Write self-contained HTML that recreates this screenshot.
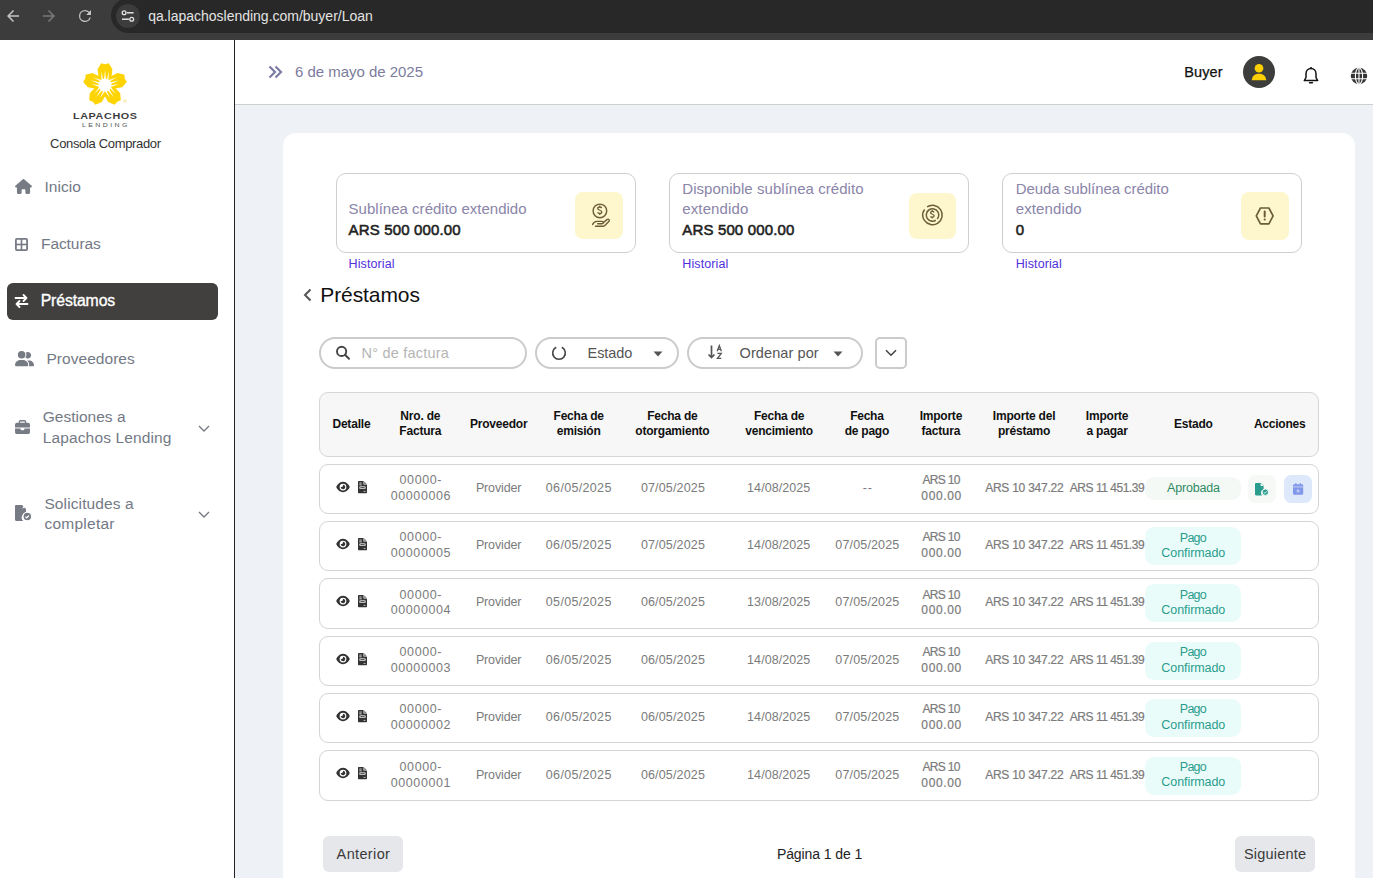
<!DOCTYPE html>
<html><head><meta charset="utf-8"><style>
html,body{margin:0;padding:0;width:1373px;height:878px;overflow:hidden;background:#fff;position:relative;font-family:"Liberation Sans", sans-serif;}
.t{position:absolute;white-space:nowrap;line-height:1;font-family:"Liberation Sans", sans-serif;}
svg{overflow:visible}
div{box-sizing:content-box}
</style></head><body>
<div style="position:absolute;left:0px;top:0px;width:1373px;height:40px;background:#3c3c3c"></div>
<div style="position:absolute;left:111px;top:-2px;width:1300px;height:35px;background:#282828;border-radius:17.5px"></div>
<div style="position:absolute;left:116px;top:4px;width:24px;height:24px;background:#3c3c3c;border-radius:50%"></div>
<svg style="position:absolute;left:4px;top:7px;" width="18" height="18" viewBox="0 0 24 24"><path d="M20 11H7.83l5.59-5.59L12 4l-8 8 8 8 1.41-1.41L7.83 13H20v-2z" fill="#c4c4c4"/></svg>
<svg style="position:absolute;left:40px;top:7px;" width="18" height="18" viewBox="0 0 24 24"><path d="M4 11h12.17l-5.59-5.59L12 4l8 8-8 8-1.41-1.41L16.17 13H4v-2z" fill="#7a7a7a"/></svg>
<svg style="position:absolute;left:76px;top:7px;" width="18" height="18" viewBox="0 0 24 24"><path d="M17.65 6.35A7.96 7.96 0 0 0 12 4a8 8 0 1 0 7.73 10h-1.8A6.3 6.3 0 1 1 12 5.7c1.74 0 3.3.72 4.44 1.86L13.5 10.5H20V4l-2.35 2.35z" fill="#c4c4c4"/></svg>
<svg style="position:absolute;left:116px;top:4px;" width="24" height="24" viewBox="0 0 24 24"><circle cx="8.1" cy="8.8" r="1.9" fill="none" stroke="#e3e3e3" stroke-width="1.3"/><line x1="10.9" y1="8.8" x2="17.6" y2="8.8" stroke="#e3e3e3" stroke-width="1.5"/><circle cx="15.7" cy="15.2" r="1.9" fill="none" stroke="#e3e3e3" stroke-width="1.3"/><line x1="6" y1="15.2" x2="12.9" y2="15.2" stroke="#e3e3e3" stroke-width="1.5"/></svg>
<div style="position:absolute;left:0px;top:40px;width:234px;height:838px;background:#fff"></div>
<div style="position:absolute;left:234px;top:40px;width:1px;height:838px;background:#222"></div>
<div style="position:absolute;left:235px;top:40px;width:1138px;height:64px;background:#fff"></div>
<div style="position:absolute;left:235px;top:104px;width:1138px;height:1px;background:#cfcfcf"></div>
<div style="position:absolute;left:235px;top:105px;width:1138px;height:773px;background:#eef1f5"></div>
<div style="position:absolute;left:283px;top:133px;width:1072px;height:760px;background:#fff;border-radius:13px"></div>
<svg style="position:absolute;left:82.8px;top:62.5px;" width="44" height="44" viewBox="-20.8 -20.8 41.6 41.6"><g transform="rotate(0)"><path d="M-3.6 -20.5 L0 -19.6 L3.6 -20.5 L7 -14.8 L6.2 -8 L3.2 -3.5 L-3.2 -3.5 L-6.2 -8 L-7 -14.8 Z" fill="#fdd300"/></g><g transform="rotate(72)"><path d="M-3.6 -20.5 L0 -19.6 L3.6 -20.5 L7 -14.8 L6.2 -8 L3.2 -3.5 L-3.2 -3.5 L-6.2 -8 L-7 -14.8 Z" fill="#fdd300"/></g><g transform="rotate(144)"><path d="M-3.6 -20.5 L0 -19.6 L3.6 -20.5 L7 -14.8 L6.2 -8 L3.2 -3.5 L-3.2 -3.5 L-6.2 -8 L-7 -14.8 Z" fill="#fdd300"/></g><g transform="rotate(216)"><path d="M-3.6 -20.5 L0 -19.6 L3.6 -20.5 L7 -14.8 L6.2 -8 L3.2 -3.5 L-3.2 -3.5 L-6.2 -8 L-7 -14.8 Z" fill="#fdd300"/></g><g transform="rotate(288)"><path d="M-3.6 -20.5 L0 -19.6 L3.6 -20.5 L7 -14.8 L6.2 -8 L3.2 -3.5 L-3.2 -3.5 L-6.2 -8 L-7 -14.8 Z" fill="#fdd300"/></g><g transform="rotate(0)"><path d="M-3.4 -5 L-3.4 -13.2 L-1.9 -5 Z M-0.9 -5 L0 -14.5 L0.9 -5 Z M1.9 -5 L3.4 -13.2 L3.4 -5 Z" fill="#fff"/></g><g transform="rotate(72)"><path d="M-3.4 -5 L-3.4 -13.2 L-1.9 -5 Z M-0.9 -5 L0 -14.5 L0.9 -5 Z M1.9 -5 L3.4 -13.2 L3.4 -5 Z" fill="#fff"/></g><g transform="rotate(144)"><path d="M-3.4 -5 L-3.4 -13.2 L-1.9 -5 Z M-0.9 -5 L0 -14.5 L0.9 -5 Z M1.9 -5 L3.4 -13.2 L3.4 -5 Z" fill="#fff"/></g><g transform="rotate(216)"><path d="M-3.4 -5 L-3.4 -13.2 L-1.9 -5 Z M-0.9 -5 L0 -14.5 L0.9 -5 Z M1.9 -5 L3.4 -13.2 L3.4 -5 Z" fill="#fff"/></g><g transform="rotate(288)"><path d="M-3.4 -5 L-3.4 -13.2 L-1.9 -5 Z M-0.9 -5 L0 -14.5 L0.9 -5 Z M1.9 -5 L3.4 -13.2 L3.4 -5 Z" fill="#fff"/></g><circle cx="0" cy="0" r="6.2" fill="#fff"/></svg>
<svg style="position:absolute;left:123px;top:98.5px;" width="4" height="4" viewBox="0 0 4 4"><circle cx="2" cy="2" r="1.3" fill="none" stroke="#f5dc70" stroke-width="0.6"/></svg>
<div style="position:absolute;left:7px;top:283px;width:211px;height:37px;background:#41403e;border-radius:6px"></div>
<svg style="position:absolute;left:15px;top:179px;" width="17" height="15" viewBox="0 0 576 512"><path fill="#777b84" d="M575.8 255.5c0 18-15 32.1-32 32.1h-32l.7 160.2c0 2.7-.2 5.4-.5 8.1V472c0 22.1-17.9 40-40 40H456c-1.1 0-2.2 0-3.3-.1c-1.4 .1-2.8 .1-4.2 .1H416 392c-22.1 0-40-17.9-40-40V448 384c0-17.7-14.3-32-32-32H256c-17.7 0-32 14.3-32 32v64 24c0 22.1-17.9 40-40 40H160 128.1c-1.5 0-3-.1-4.5-.2c-1.2 .1-2.4 .2-3.6 .2H104c-22.1 0-40-17.9-40-40V360c0-.9 0-1.9 .1-2.8V287.6H32c-18 0-32-14-32-32.1c0-9 3-17 10-24L266.4 8c7-7 15-8 22-8s15 2 21 7L564.8 231.5c8 7 12 15 11 24z"/></svg>
<svg style="position:absolute;left:15px;top:238px;" width="13" height="13" viewBox="0 0 13 13"><rect x="0.9" y="0.9" width="11.2" height="11.2" rx="1" fill="none" stroke="#777b84" stroke-width="1.8"/><line x1="6.5" y1="1" x2="6.5" y2="12" stroke="#777b84" stroke-width="1.6"/><line x1="1" y1="6.5" x2="12" y2="6.5" stroke="#777b84" stroke-width="1.6"/></svg>
<svg style="position:absolute;left:14px;top:293px;" width="15" height="16" viewBox="0 0 15 16"><path d="M1.5 5h11M9.5 2l3 3-3 3M13.5 11h-11M5.5 8l-3 3 3 3" fill="none" stroke="#fff" stroke-width="1.8" stroke-linecap="round" stroke-linejoin="round"/></svg>
<svg style="position:absolute;left:15px;top:351px;" width="19" height="15.2" viewBox="0 0 640 512"><path fill="#777b84" d="M96 128a128 128 0 1 1 256 0A128 128 0 1 1 96 128zM0 482.3C0 383.8 79.8 304 178.3 304h91.4C368.2 304 448 383.8 448 482.3c0 16.4-13.3 29.7-29.7 29.7H29.7C13.3 512 0 498.7 0 482.3zM609.3 512H471.4c5.4-9.4 8.6-20.3 8.6-32v-8c0-60.7-27.1-115.2-69.8-151.8c2.4-.1 4.7-.2 7.1-.2h61.4C567.8 320 640 392.2 640 481.3c0 17-13.8 30.7-30.7 30.7zM432 256c-31 0-59-12.6-79.3-32.9C372.4 196.5 384 163.6 384 128c0-26.8-6.6-52.1-18.3-74.3C384.3 40.1 407.2 32 432 32c61.9 0 112 50.1 112 112s-50.1 112-112 112z"/></svg>
<svg style="position:absolute;left:15px;top:420px;" width="15" height="14" viewBox="0 0 512 480"><path fill="#777b84" d="M184 48H328c4.4 0 8 3.6 8 8V96H176V56c0-4.4 3.6-8 8-8zm-56 8V96H64C28.7 96 0 124.7 0 160v96H192 320 512V160c0-35.3-28.7-64-64-64H384V56c0-30.9-25.1-56-56-56H184c-30.9 0-56 25.1-56 56zM512 288H320v32c0 17.7-14.3 32-32 32H224c-17.7 0-32-14.3-32-32V288H0V416c0 35.3 28.7 64 64 64H448c35.3 0 64-28.7 64-64V288z"/></svg>
<svg style="position:absolute;left:15px;top:505px;" width="18" height="17" viewBox="0 0 18 17"><path d="M0 1.2C0 .5.5 0 1.2 0H7l4 4v4A4.6 4.6 0 0 0 8.2 16H1.2C.5 16 0 15.5 0 14.8z" fill="#777b84"/><path d="M7 0v4h4z" fill="#fff"/><path d="M7.5 0.5v3h3" fill="none" stroke="#777b84" stroke-width="0.9"/><circle cx="12.3" cy="11.5" r="4.3" fill="#777b84" stroke="#fff" stroke-width="1.1"/><path d="M10.4 11.6l1.3 1.3 2.3-2.4" fill="none" stroke="#fff" stroke-width="1.1"/></svg>
<svg style="position:absolute;left:197.5px;top:425px;" width="12" height="8" viewBox="0 0 12 8"><path d="M1 1l5 5L11 1" fill="none" stroke="#777b84" stroke-width="1.4"/></svg>
<svg style="position:absolute;left:197.5px;top:511px;" width="12" height="8" viewBox="0 0 12 8"><path d="M1 1l5 5L11 1" fill="none" stroke="#777b84" stroke-width="1.4"/></svg>
<svg style="position:absolute;left:268px;top:65px;" width="15" height="14" viewBox="0 0 15 14"><path d="M1.5 1.5l5.5 5.5-5.5 5.5M7.5 1.5l5.5 5.5-5.5 5.5" fill="none" stroke="#7b7ba3" stroke-width="2.2" stroke-linejoin="miter"/></svg>
<div style="position:absolute;left:1243px;top:56px;width:32px;height:32px;background:#3d3d3b;border-radius:50%"></div>
<svg style="position:absolute;left:1243px;top:56px;" width="32" height="32" viewBox="0 0 32 32"><circle cx="16" cy="12.2" r="4.3" fill="#fcd000"/><path d="M8.8 24.3c0-4 3-6.6 7.2-6.6s7.2 2.6 7.2 6.6z" fill="#fcd000"/></svg>
<svg style="position:absolute;left:1302px;top:66px;" width="18" height="19" viewBox="0 0 18 19"><path d="M9 2.6c-3 0-5 2.3-5 5.3v3.6L2.3 14.6h13.4L14 11.5V7.9c0-3-2-5.3-5-5.3z" fill="none" stroke="#111" stroke-width="1.5" stroke-linejoin="round"/><path d="M9 1v1.6" stroke="#111" stroke-width="1.5"/><path d="M7.6 16.8h2.8" stroke="#111" stroke-width="1.6" stroke-linecap="round"/></svg>
<svg style="position:absolute;left:1350px;top:67px;" width="18" height="18" viewBox="0 0 18 18"><circle cx="9" cy="9" r="8.2" fill="#333"/><path d="M0.8 6.2h16.4M0.8 11.8h16.4M9 0.8v16.4" stroke="#fff" stroke-width="1.1"/><ellipse cx="9" cy="9" rx="3.6" ry="8.2" fill="none" stroke="#fff" stroke-width="1.1"/></svg>
<div style="position:absolute;left:336px;top:173px;width:298px;height:78px;border:1px solid #cfcfcf;border-radius:10px;background:#fff"></div>
<div style="position:absolute;left:669px;top:173px;width:298px;height:78px;border:1px solid #cfcfcf;border-radius:10px;background:#fff"></div>
<div style="position:absolute;left:1002px;top:173px;width:298px;height:78px;border:1px solid #cfcfcf;border-radius:10px;background:#fff"></div>
<div style="position:absolute;left:575px;top:192px;width:48px;height:47px;background:#fef6cc;border-radius:8px"></div>
<svg style="position:absolute;left:575px;top:192px;" width="48" height="47" viewBox="0 0 48 47"><circle cx="24.9" cy="18.9" r="6.8" fill="none" stroke="#6b5d3a" stroke-width="1.4"/><path d="M26.7 16c-.5-.7-1.2-1-2-1-1.2 0-2 .7-2 1.6 0 2 4.1 1.3 4.1 3.3 0 .9-.9 1.6-2.2 1.6-.9 0-1.6-.4-2.1-1.1M24.8 13.6v1.4M24.8 21.5v1.5" fill="none" stroke="#6b5d3a" stroke-width="1.3"/><path d="M17.6 32.6c.8-2.1 2.4-3.2 4.4-3.2h5c.9 0 1.4.6 1.4 1.2s-.5 1.2-1.4 1.2h-4.3M28 31l3.9-3.4c.7-.6 1.6-.6 2.1 0 .5.6.4 1.4-.2 2l-3.9 3.8c-.6.6-1.3.9-2.1.9h-7.3" fill="none" stroke="#6b5d3a" stroke-width="1.4" stroke-linecap="round"/></svg>
<div style="position:absolute;left:909px;top:193px;width:47px;height:46px;background:#fef6cc;border-radius:8px"></div>
<svg style="position:absolute;left:909px;top:193px;" width="47" height="46" viewBox="0 0 47 46"><circle cx="23.5" cy="22" r="9.7" fill="none" stroke="#6b5d3a" stroke-width="1.5" stroke-dasharray="57 4" transform="rotate(236 23.5 22)"/><circle cx="23.5" cy="22" r="6.2" fill="none" stroke="#6b5d3a" stroke-width="1.5" stroke-dasharray="36 3" transform="rotate(58 23.5 22)"/><path d="M25.1 19.3c-.4-.6-1-.9-1.8-.9-1 0-1.7.6-1.7 1.4 0 1.8 3.6 1.1 3.6 3 0 .8-.8 1.4-1.9 1.4-.8 0-1.4-.3-1.8-.9M23.3 17.1v1.3M23.3 24.3v1.3" fill="none" stroke="#6b5d3a" stroke-width="1.3"/></svg>
<div style="position:absolute;left:1241px;top:192px;width:48px;height:48px;background:#fef6cc;border-radius:8px"></div>
<svg style="position:absolute;left:1241px;top:192px;" width="48" height="48" viewBox="0 0 48 48"><path d="M19.5 16h8.4l4.2 7.9-4.2 7.9h-8.4l-4.2-7.9z" fill="none" stroke="#6b5d3a" stroke-width="1.7" stroke-linejoin="round"/><path d="M23.7 19.6v5" stroke="#6b5d3a" stroke-width="2" stroke-linecap="round"/><circle cx="23.7" cy="27.5" r="1.1" fill="#6b5d3a"/></svg>
<svg style="position:absolute;left:302px;top:288px;" width="11" height="14" viewBox="0 0 11 14"><path d="M8.5 1.5L3 7l5.5 5.5" fill="none" stroke="#555" stroke-width="2"/></svg>
<div style="position:absolute;left:319px;top:337px;width:204px;height:28px;border:2px solid #cbcbcb;border-radius:16px"></div>
<svg style="position:absolute;left:335px;top:345px;" width="16" height="15" viewBox="0 0 16 15"><circle cx="6.6" cy="6.4" r="4.6" fill="none" stroke="#444" stroke-width="1.9"/><path d="M10 9.8l4 4" stroke="#444" stroke-width="2" stroke-linecap="round"/></svg>
<div style="position:absolute;left:535px;top:337px;width:140px;height:28px;border:2px solid #cbcbcb;border-radius:16px"></div>
<svg style="position:absolute;left:551px;top:345px;" width="16" height="16" viewBox="0 0 16 16"><path d="M5.2 2.3A6.3 6.3 0 1 0 10.8 2.3" fill="none" stroke="#444" stroke-width="1.6"/></svg>
<svg style="position:absolute;left:652px;top:350px;" width="12" height="8" viewBox="0 0 12 8"><path d="M1.5 1.5h9L6 6.5z" fill="#555"/></svg>
<div style="position:absolute;left:687px;top:337px;width:172px;height:28px;border:2px solid #cbcbcb;border-radius:16px"></div>
<svg style="position:absolute;left:707px;top:344px;" width="18" height="16" viewBox="0 0 18 16"><path d="M4.5 1.5v12M1.5 10.5l3 3 3-3" fill="none" stroke="#555" stroke-width="1.7"/><path d="M10.2 7.2l2.1-5.6 2.1 5.6M10.9 5.4h2.8" fill="none" stroke="#555" stroke-width="1.3"/><path d="M10.4 9.3h3.9l-3.9 5h3.9" fill="none" stroke="#555" stroke-width="1.3"/></svg>
<svg style="position:absolute;left:832px;top:350px;" width="12" height="8" viewBox="0 0 12 8"><path d="M1.5 1.5h9L6 6.5z" fill="#555"/></svg>
<div style="position:absolute;left:875px;top:337px;width:28px;height:28px;border:2px solid #cbcbcb;border-radius:5px"></div>
<svg style="position:absolute;left:885px;top:349px;" width="12" height="8" viewBox="0 0 12 8"><path d="M1 1.2l5 5 5-5" fill="none" stroke="#444" stroke-width="1.6"/></svg>
<div style="position:absolute;left:319px;top:392px;width:998px;height:63px;border:1px solid #d6d6d6;border-radius:9px;background:#f7f7f7"></div>
<div style="position:absolute;left:319px;top:464px;width:998px;height:48px;border:1px solid #d4d4d4;border-radius:9px;background:#fff"></div>
<svg style="position:absolute;left:336px;top:480.79999999999995px;" width="14" height="12" viewBox="0 0 576 512"><path fill="#333" d="M288 32c-80.8 0-145.5 36.8-192.6 80.6C48.6 156 17.3 208 2.5 243.7c-3.3 7.9-3.3 16.7 0 24.6C17.3 304 48.6 356 95.4 399.4C142.5 443.2 207.2 480 288 480s145.5-36.8 192.6-80.6c46.8-43.5 78.1-95.4 93-131.1c3.3-7.9 3.3-16.7 0-24.6c-14.9-35.7-46.2-87.7-93-131.1C433.5 68.8 368.8 32 288 32zM144 256a144 144 0 1 1 288 0 144 144 0 1 1 -288 0zm144-64c0 35.3-28.7 64-64 64c-7.1 0-13.9-1.2-20.3-3.3c-5.5-1.8-11.9 1.6-11.7 7.4c.3 6.9 1.3 13.8 3.2 20.7c13.7 51.2 66.4 81.6 117.6 67.9s81.6-66.4 67.9-117.6c-11.1-41.5-47.8-69.4-88.6-71.1c-5.8-.2-9.2 6.1-7.4 11.7c2.1 6.4 3.3 13.2 3.3 20.3z"/></svg>
<svg style="position:absolute;left:358.1px;top:481.0px;" width="9" height="12.2" viewBox="0 0 9 12.2"><path fill="#333" d="M1 0H5.6L9 3.4V11.2C9 11.8 8.6 12.2 8 12.2H1C.4 12.2 0 11.8 0 11.2V1C0 .4.4 0 1 0z"/><path fill="#fff" d="M5.5 0V3.5H9z"/><path fill="#333" d="M6.3 0.9L8.2 2.8H6.3z"/><rect x="1.3" y="1.6" width="2.4" height="0.9" fill="#e0e0e0"/><rect x="1.3" y="3.4" width="2.4" height="0.9" fill="#e0e0e0"/><rect x="1.2" y="5.3" width="6.6" height="2.8" rx="1.4" fill="#d6d6d6"/><rect x="2.4" y="6.25" width="4.2" height="0.9" fill="#333"/><rect x="5.6" y="9.9" width="1.9" height="0.9" fill="#cfcfcf"/></svg>
<div style="position:absolute;left:1145px;top:477px;width:96px;height:23px;background:#f5f9f6;border-radius:9px"></div>
<div style="position:absolute;left:1248px;top:475px;width:28px;height:28px;background:#f6f9f6;border-radius:7px"></div>
<svg style="position:absolute;left:1255px;top:482.59999999999997px;" width="15" height="13" viewBox="0 0 15 13"><path d="M0 1.2C0 .5.5 0 1.2 0h4.8L8.6 2.6v3.6A3.8 3.8 0 0 0 7 12.4H1.2C.5 12.4 0 11.9 0 11.2z" fill="#2a9d8f"/><path d="M5.7 0v2.9h2.9z" fill="#fff"/><circle cx="10.3" cy="9.2" r="3.2" fill="#2a9d8f" stroke="#fff" stroke-width="0.9"/><path d="M8.9 9.3l1 1 1.8-1.9" fill="none" stroke="#fff" stroke-width="0.9"/></svg>
<div style="position:absolute;left:1284px;top:475px;width:28px;height:28px;background:#dde9fb;border-radius:7px"></div>
<svg style="position:absolute;left:1293px;top:482.7px;" width="11" height="12" viewBox="0 0 11 12"><rect x="0" y="1.2" width="10.2" height="10.6" rx="1.3" fill="#8197ea"/><rect x="0" y="3.3" width="10.2" height="1.2" fill="#b9c5f3"/><rect x="2.3" y="0" width="1.1" height="2.4" fill="#8197ea"/><rect x="6.8" y="0" width="1.1" height="2.4" fill="#8197ea"/><path d="M5.1 6.2v3.6M3.3 8h3.6" stroke="#c8d2f6" stroke-width="1.2"/></svg>
<div style="position:absolute;left:319px;top:521px;width:998px;height:48px;border:1px solid #d4d4d4;border-radius:9px;background:#fff"></div>
<svg style="position:absolute;left:336px;top:537.6999999999999px;" width="14" height="12" viewBox="0 0 576 512"><path fill="#333" d="M288 32c-80.8 0-145.5 36.8-192.6 80.6C48.6 156 17.3 208 2.5 243.7c-3.3 7.9-3.3 16.7 0 24.6C17.3 304 48.6 356 95.4 399.4C142.5 443.2 207.2 480 288 480s145.5-36.8 192.6-80.6c46.8-43.5 78.1-95.4 93-131.1c3.3-7.9 3.3-16.7 0-24.6c-14.9-35.7-46.2-87.7-93-131.1C433.5 68.8 368.8 32 288 32zM144 256a144 144 0 1 1 288 0 144 144 0 1 1 -288 0zm144-64c0 35.3-28.7 64-64 64c-7.1 0-13.9-1.2-20.3-3.3c-5.5-1.8-11.9 1.6-11.7 7.4c.3 6.9 1.3 13.8 3.2 20.7c13.7 51.2 66.4 81.6 117.6 67.9s81.6-66.4 67.9-117.6c-11.1-41.5-47.8-69.4-88.6-71.1c-5.8-.2-9.2 6.1-7.4 11.7c2.1 6.4 3.3 13.2 3.3 20.3z"/></svg>
<svg style="position:absolute;left:358.1px;top:537.9px;" width="9" height="12.2" viewBox="0 0 9 12.2"><path fill="#333" d="M1 0H5.6L9 3.4V11.2C9 11.8 8.6 12.2 8 12.2H1C.4 12.2 0 11.8 0 11.2V1C0 .4.4 0 1 0z"/><path fill="#fff" d="M5.5 0V3.5H9z"/><path fill="#333" d="M6.3 0.9L8.2 2.8H6.3z"/><rect x="1.3" y="1.6" width="2.4" height="0.9" fill="#e0e0e0"/><rect x="1.3" y="3.4" width="2.4" height="0.9" fill="#e0e0e0"/><rect x="1.2" y="5.3" width="6.6" height="2.8" rx="1.4" fill="#d6d6d6"/><rect x="2.4" y="6.25" width="4.2" height="0.9" fill="#333"/><rect x="5.6" y="9.9" width="1.9" height="0.9" fill="#cfcfcf"/></svg>
<div style="position:absolute;left:1145px;top:527px;width:96px;height:38px;background:#eafcfa;border-radius:9px"></div>
<div style="position:absolute;left:319px;top:578px;width:998px;height:49px;border:1px solid #d4d4d4;border-radius:9px;background:#fff"></div>
<svg style="position:absolute;left:336px;top:595.0px;" width="14" height="12" viewBox="0 0 576 512"><path fill="#333" d="M288 32c-80.8 0-145.5 36.8-192.6 80.6C48.6 156 17.3 208 2.5 243.7c-3.3 7.9-3.3 16.7 0 24.6C17.3 304 48.6 356 95.4 399.4C142.5 443.2 207.2 480 288 480s145.5-36.8 192.6-80.6c46.8-43.5 78.1-95.4 93-131.1c3.3-7.9 3.3-16.7 0-24.6c-14.9-35.7-46.2-87.7-93-131.1C433.5 68.8 368.8 32 288 32zM144 256a144 144 0 1 1 288 0 144 144 0 1 1 -288 0zm144-64c0 35.3-28.7 64-64 64c-7.1 0-13.9-1.2-20.3-3.3c-5.5-1.8-11.9 1.6-11.7 7.4c.3 6.9 1.3 13.8 3.2 20.7c13.7 51.2 66.4 81.6 117.6 67.9s81.6-66.4 67.9-117.6c-11.1-41.5-47.8-69.4-88.6-71.1c-5.8-.2-9.2 6.1-7.4 11.7c2.1 6.4 3.3 13.2 3.3 20.3z"/></svg>
<svg style="position:absolute;left:358.1px;top:595.2px;" width="9" height="12.2" viewBox="0 0 9 12.2"><path fill="#333" d="M1 0H5.6L9 3.4V11.2C9 11.8 8.6 12.2 8 12.2H1C.4 12.2 0 11.8 0 11.2V1C0 .4.4 0 1 0z"/><path fill="#fff" d="M5.5 0V3.5H9z"/><path fill="#333" d="M6.3 0.9L8.2 2.8H6.3z"/><rect x="1.3" y="1.6" width="2.4" height="0.9" fill="#e0e0e0"/><rect x="1.3" y="3.4" width="2.4" height="0.9" fill="#e0e0e0"/><rect x="1.2" y="5.3" width="6.6" height="2.8" rx="1.4" fill="#d6d6d6"/><rect x="2.4" y="6.25" width="4.2" height="0.9" fill="#333"/><rect x="5.6" y="9.9" width="1.9" height="0.9" fill="#cfcfcf"/></svg>
<div style="position:absolute;left:1145px;top:584px;width:96px;height:38px;background:#eafcfa;border-radius:9px"></div>
<div style="position:absolute;left:319px;top:636px;width:998px;height:48px;border:1px solid #d4d4d4;border-radius:9px;background:#fff"></div>
<svg style="position:absolute;left:336px;top:652.6px;" width="14" height="12" viewBox="0 0 576 512"><path fill="#333" d="M288 32c-80.8 0-145.5 36.8-192.6 80.6C48.6 156 17.3 208 2.5 243.7c-3.3 7.9-3.3 16.7 0 24.6C17.3 304 48.6 356 95.4 399.4C142.5 443.2 207.2 480 288 480s145.5-36.8 192.6-80.6c46.8-43.5 78.1-95.4 93-131.1c3.3-7.9 3.3-16.7 0-24.6c-14.9-35.7-46.2-87.7-93-131.1C433.5 68.8 368.8 32 288 32zM144 256a144 144 0 1 1 288 0 144 144 0 1 1 -288 0zm144-64c0 35.3-28.7 64-64 64c-7.1 0-13.9-1.2-20.3-3.3c-5.5-1.8-11.9 1.6-11.7 7.4c.3 6.9 1.3 13.8 3.2 20.7c13.7 51.2 66.4 81.6 117.6 67.9s81.6-66.4 67.9-117.6c-11.1-41.5-47.8-69.4-88.6-71.1c-5.8-.2-9.2 6.1-7.4 11.7c2.1 6.4 3.3 13.2 3.3 20.3z"/></svg>
<svg style="position:absolute;left:358.1px;top:652.8000000000001px;" width="9" height="12.2" viewBox="0 0 9 12.2"><path fill="#333" d="M1 0H5.6L9 3.4V11.2C9 11.8 8.6 12.2 8 12.2H1C.4 12.2 0 11.8 0 11.2V1C0 .4.4 0 1 0z"/><path fill="#fff" d="M5.5 0V3.5H9z"/><path fill="#333" d="M6.3 0.9L8.2 2.8H6.3z"/><rect x="1.3" y="1.6" width="2.4" height="0.9" fill="#e0e0e0"/><rect x="1.3" y="3.4" width="2.4" height="0.9" fill="#e0e0e0"/><rect x="1.2" y="5.3" width="6.6" height="2.8" rx="1.4" fill="#d6d6d6"/><rect x="2.4" y="6.25" width="4.2" height="0.9" fill="#333"/><rect x="5.6" y="9.9" width="1.9" height="0.9" fill="#cfcfcf"/></svg>
<div style="position:absolute;left:1145px;top:642px;width:96px;height:38px;background:#eafcfa;border-radius:9px"></div>
<div style="position:absolute;left:319px;top:693px;width:998px;height:48px;border:1px solid #d4d4d4;border-radius:9px;background:#fff"></div>
<svg style="position:absolute;left:336px;top:709.6px;" width="14" height="12" viewBox="0 0 576 512"><path fill="#333" d="M288 32c-80.8 0-145.5 36.8-192.6 80.6C48.6 156 17.3 208 2.5 243.7c-3.3 7.9-3.3 16.7 0 24.6C17.3 304 48.6 356 95.4 399.4C142.5 443.2 207.2 480 288 480s145.5-36.8 192.6-80.6c46.8-43.5 78.1-95.4 93-131.1c3.3-7.9 3.3-16.7 0-24.6c-14.9-35.7-46.2-87.7-93-131.1C433.5 68.8 368.8 32 288 32zM144 256a144 144 0 1 1 288 0 144 144 0 1 1 -288 0zm144-64c0 35.3-28.7 64-64 64c-7.1 0-13.9-1.2-20.3-3.3c-5.5-1.8-11.9 1.6-11.7 7.4c.3 6.9 1.3 13.8 3.2 20.7c13.7 51.2 66.4 81.6 117.6 67.9s81.6-66.4 67.9-117.6c-11.1-41.5-47.8-69.4-88.6-71.1c-5.8-.2-9.2 6.1-7.4 11.7c2.1 6.4 3.3 13.2 3.3 20.3z"/></svg>
<svg style="position:absolute;left:358.1px;top:709.8000000000001px;" width="9" height="12.2" viewBox="0 0 9 12.2"><path fill="#333" d="M1 0H5.6L9 3.4V11.2C9 11.8 8.6 12.2 8 12.2H1C.4 12.2 0 11.8 0 11.2V1C0 .4.4 0 1 0z"/><path fill="#fff" d="M5.5 0V3.5H9z"/><path fill="#333" d="M6.3 0.9L8.2 2.8H6.3z"/><rect x="1.3" y="1.6" width="2.4" height="0.9" fill="#e0e0e0"/><rect x="1.3" y="3.4" width="2.4" height="0.9" fill="#e0e0e0"/><rect x="1.2" y="5.3" width="6.6" height="2.8" rx="1.4" fill="#d6d6d6"/><rect x="2.4" y="6.25" width="4.2" height="0.9" fill="#333"/><rect x="5.6" y="9.9" width="1.9" height="0.9" fill="#cfcfcf"/></svg>
<div style="position:absolute;left:1145px;top:699px;width:96px;height:38px;background:#eafcfa;border-radius:9px"></div>
<div style="position:absolute;left:319px;top:750px;width:998px;height:49px;border:1px solid #d4d4d4;border-radius:9px;background:#fff"></div>
<svg style="position:absolute;left:336px;top:767.1999999999999px;" width="14" height="12" viewBox="0 0 576 512"><path fill="#333" d="M288 32c-80.8 0-145.5 36.8-192.6 80.6C48.6 156 17.3 208 2.5 243.7c-3.3 7.9-3.3 16.7 0 24.6C17.3 304 48.6 356 95.4 399.4C142.5 443.2 207.2 480 288 480s145.5-36.8 192.6-80.6c46.8-43.5 78.1-95.4 93-131.1c3.3-7.9 3.3-16.7 0-24.6c-14.9-35.7-46.2-87.7-93-131.1C433.5 68.8 368.8 32 288 32zM144 256a144 144 0 1 1 288 0 144 144 0 1 1 -288 0zm144-64c0 35.3-28.7 64-64 64c-7.1 0-13.9-1.2-20.3-3.3c-5.5-1.8-11.9 1.6-11.7 7.4c.3 6.9 1.3 13.8 3.2 20.7c13.7 51.2 66.4 81.6 117.6 67.9s81.6-66.4 67.9-117.6c-11.1-41.5-47.8-69.4-88.6-71.1c-5.8-.2-9.2 6.1-7.4 11.7c2.1 6.4 3.3 13.2 3.3 20.3z"/></svg>
<svg style="position:absolute;left:358.1px;top:767.4px;" width="9" height="12.2" viewBox="0 0 9 12.2"><path fill="#333" d="M1 0H5.6L9 3.4V11.2C9 11.8 8.6 12.2 8 12.2H1C.4 12.2 0 11.8 0 11.2V1C0 .4.4 0 1 0z"/><path fill="#fff" d="M5.5 0V3.5H9z"/><path fill="#333" d="M6.3 0.9L8.2 2.8H6.3z"/><rect x="1.3" y="1.6" width="2.4" height="0.9" fill="#e0e0e0"/><rect x="1.3" y="3.4" width="2.4" height="0.9" fill="#e0e0e0"/><rect x="1.2" y="5.3" width="6.6" height="2.8" rx="1.4" fill="#d6d6d6"/><rect x="2.4" y="6.25" width="4.2" height="0.9" fill="#333"/><rect x="5.6" y="9.9" width="1.9" height="0.9" fill="#cfcfcf"/></svg>
<div style="position:absolute;left:1145px;top:757px;width:96px;height:38px;background:#eafcfa;border-radius:9px"></div>
<div style="position:absolute;left:323px;top:836px;width:80px;height:36px;background:#e5e7eb;border-radius:6px"></div>
<div style="position:absolute;left:1235px;top:836px;width:80px;height:36px;background:#e5e7eb;border-radius:6px"></div>
<span class="t" id="t0" style="left:148.20px;top:8.60px;font-size:14px;color:#e3e3e3;letter-spacing:-0.011px;">qa.lapachoslending.com/buyer/Loan</span>
<span class="t" id="t1" style="left:50.10px;top:137.00px;font-size:13px;color:#333333;letter-spacing:-0.334px;">Consola Comprador</span>
<span class="t" id="t2" style="left:44.40px;top:179.00px;font-size:15.5px;color:#737985;letter-spacing:0.083px;">Inicio</span>
<span class="t" id="t3" style="left:41.00px;top:236.00px;font-size:15.5px;color:#737985;letter-spacing:-0.073px;">Facturas</span>
<span class="t" id="t4" style="left:40.70px;top:293.40px;font-size:15.8px;color:#ffffff;letter-spacing:-0.125px;-webkit-text-stroke:0.35px #fff;">Préstamos</span>
<span class="t" id="t5" style="left:46.40px;top:350.80px;font-size:15.5px;color:#737985;letter-spacing:0.051px;">Proveedores</span>
<span class="t" id="t6" style="left:42.70px;top:409.00px;font-size:15.5px;color:#737985;letter-spacing:0.018px;">Gestiones a</span>
<span class="t" id="t7" style="left:42.70px;top:429.90px;font-size:15.5px;color:#737985;letter-spacing:0.140px;">Lapachos Lending</span>
<span class="t" id="t8" style="left:44.40px;top:495.70px;font-size:15.5px;color:#737985;letter-spacing:0.117px;">Solicitudes a</span>
<span class="t" id="t9" style="left:44.40px;top:516.00px;font-size:15.5px;color:#737985;letter-spacing:0.255px;">completar</span>
<span class="t" id="t10" style="left:72.80px;top:112.00px;font-size:8.3px;color:#3d3d3d;font-weight:700;letter-spacing:0.468px;transform:scaleX(1.3);transform-origin:0 0;">LAPACHOS</span>
<span class="t" id="t11" style="left:81.60px;top:123.30px;font-size:5.8px;color:#555555;letter-spacing:2.009px;transform:scaleX(1.2);transform-origin:0 0;">LENDING</span>
<span class="t" id="t12" style="left:295.00px;top:64.00px;font-size:15px;color:#7c7c9e;letter-spacing:-0.027px;">6 de mayo de 2025</span>
<span class="t" id="t13" style="left:1184.30px;top:64.80px;font-size:14.5px;color:#111111;letter-spacing:0.077px;-webkit-text-stroke:0.25px #111;">Buyer</span>
<span class="t" id="t14" style="left:348.60px;top:201.20px;font-size:15px;color:#8a85a9;letter-spacing:0.014px;">Sublínea crédito extendido</span>
<span class="t" id="t15" style="left:348.60px;top:222.00px;font-size:15px;color:#222222;letter-spacing:0.147px;-webkit-text-stroke:0.55px #222;">ARS 500 000.00</span>
<span class="t" id="t16" style="left:682.30px;top:181.30px;font-size:15px;color:#8a85a9;letter-spacing:0.041px;">Disponible sublínea crédito</span>
<span class="t" id="t17" style="left:682.30px;top:201.00px;font-size:15px;color:#8a85a9;letter-spacing:0.117px;">extendido</span>
<span class="t" id="t18" style="left:682.30px;top:222.20px;font-size:15px;color:#222222;letter-spacing:0.147px;-webkit-text-stroke:0.55px #222;">ARS 500 000.00</span>
<span class="t" id="t19" style="left:1015.70px;top:181.30px;font-size:15px;color:#8a85a9;letter-spacing:-0.056px;">Deuda sublínea crédito</span>
<span class="t" id="t20" style="left:1015.70px;top:201.00px;font-size:15px;color:#8a85a9;letter-spacing:0.117px;">extendido</span>
<span class="t" id="t21" style="left:1015.70px;top:222.20px;font-size:15px;color:#222222;-webkit-text-stroke:0.55px #222;">0</span>
<span class="t" id="t22" style="left:348.60px;top:258.00px;font-size:12.5px;color:#4f30dc;letter-spacing:0.105px;">Historial</span>
<span class="t" id="t23" style="left:682.30px;top:258.00px;font-size:12.5px;color:#4f30dc;letter-spacing:0.105px;">Historial</span>
<span class="t" id="t24" style="left:1015.70px;top:258.00px;font-size:12.5px;color:#4f30dc;letter-spacing:0.105px;">Historial</span>
<span class="t" id="t25" style="left:320.30px;top:284.00px;font-size:21px;color:#111111;letter-spacing:-0.097px;">Préstamos</span>
<span class="t" id="t26" style="left:361.50px;top:346.20px;font-size:14.5px;color:#b5b5b5;letter-spacing:0.209px;">N° de factura</span>
<span class="t" id="t27" style="left:587.60px;top:346.20px;font-size:14.5px;color:#555555;letter-spacing:-0.071px;">Estado</span>
<span class="t" id="t28" style="left:739.50px;top:346.20px;font-size:14.5px;color:#555555;letter-spacing:0.101px;">Ordenar por</span>
<span class="t" id="t29" style="left:332.41px;top:418.30px;font-size:12px;color:#111111;font-weight:700;letter-spacing:-0.197px;">Detalle</span>
<span class="t" id="t30" style="left:400.35px;top:410.40px;font-size:12px;color:#111111;font-weight:700;letter-spacing:-0.207px;">Nro. de</span>
<span class="t" id="t31" style="left:399.37px;top:425.10px;font-size:12px;color:#111111;font-weight:700;letter-spacing:-0.217px;">Factura</span>
<span class="t" id="t32" style="left:470.01px;top:418.30px;font-size:12px;color:#111111;font-weight:700;letter-spacing:-0.223px;">Proveedor</span>
<span class="t" id="t33" style="left:553.56px;top:410.40px;font-size:12px;color:#111111;font-weight:700;letter-spacing:-0.223px;">Fecha de</span>
<span class="t" id="t34" style="left:556.80px;top:425.10px;font-size:12px;color:#111111;font-weight:700;letter-spacing:-0.227px;">emisión</span>
<span class="t" id="t35" style="left:647.26px;top:410.40px;font-size:12px;color:#111111;font-weight:700;letter-spacing:-0.223px;">Fecha de</span>
<span class="t" id="t36" style="left:635.31px;top:425.10px;font-size:12px;color:#111111;font-weight:700;letter-spacing:-0.209px;">otorgamiento</span>
<span class="t" id="t37" style="left:753.96px;top:410.40px;font-size:12px;color:#111111;font-weight:700;letter-spacing:-0.223px;">Fecha de</span>
<span class="t" id="t38" style="left:745.23px;top:425.10px;font-size:12px;color:#111111;font-weight:700;letter-spacing:-0.210px;">vencimiento</span>
<span class="t" id="t39" style="left:850.18px;top:410.40px;font-size:12px;color:#111111;font-weight:700;letter-spacing:-0.260px;">Fecha</span>
<span class="t" id="t40" style="left:844.68px;top:425.10px;font-size:12px;color:#111111;font-weight:700;letter-spacing:-0.230px;">de pago</span>
<span class="t" id="t41" style="left:919.65px;top:410.40px;font-size:12px;color:#111111;font-weight:700;letter-spacing:-0.220px;">Importe</span>
<span class="t" id="t42" style="left:921.59px;top:425.10px;font-size:12px;color:#111111;font-weight:700;letter-spacing:-0.200px;">factura</span>
<span class="t" id="t43" style="left:992.83px;top:410.40px;font-size:12px;color:#111111;font-weight:700;letter-spacing:-0.194px;">Importe del</span>
<span class="t" id="t44" style="left:997.99px;top:425.10px;font-size:12px;color:#111111;font-weight:700;letter-spacing:-0.232px;">préstamo</span>
<span class="t" id="t45" style="left:1085.85px;top:410.40px;font-size:12px;color:#111111;font-weight:700;letter-spacing:-0.220px;">Importe</span>
<span class="t" id="t46" style="left:1086.50px;top:425.10px;font-size:12px;color:#111111;font-weight:700;letter-spacing:-0.213px;">a pagar</span>
<span class="t" id="t47" style="left:1174.09px;top:418.30px;font-size:12px;color:#111111;font-weight:700;letter-spacing:-0.240px;">Estado</span>
<span class="t" id="t48" style="left:1253.92px;top:418.30px;font-size:12px;color:#111111;font-weight:700;letter-spacing:-0.229px;">Acciones</span>
<span class="t" id="t49" style="left:399.50px;top:474.40px;font-size:12.5px;color:#7b7b7b;letter-spacing:0.613px;">00000-</span>
<span class="t" id="t50" style="left:390.80px;top:490.10px;font-size:12.5px;color:#7b7b7b;letter-spacing:0.568px;">00000006</span>
<span class="t" id="t51" style="left:475.90px;top:482.20px;font-size:12.5px;color:#7b7b7b;letter-spacing:-0.135px;">Provider</span>
<span class="t" id="t52" style="left:545.85px;top:482.20px;font-size:12.5px;color:#7b7b7b;letter-spacing:0.326px;">06/05/2025</span>
<span class="t" id="t53" style="left:640.90px;top:482.20px;font-size:12.5px;color:#7b7b7b;letter-spacing:0.160px;">07/05/2025</span>
<span class="t" id="t54" style="left:747.10px;top:482.20px;font-size:12.5px;color:#7b7b7b;letter-spacing:0.071px;">14/08/2025</span>
<span class="t" id="t55" style="left:862.80px;top:482.20px;font-size:12.5px;color:#7b7b7b;letter-spacing:0.672px;">--</span>
<span class="t" id="t56" style="left:922.50px;top:474.40px;font-size:12px;color:#7b7b7b;letter-spacing:-0.672px;-webkit-text-stroke:0.2px #7b7b7b;">ARS 10</span>
<span class="t" id="t57" style="left:921.30px;top:490.10px;font-size:12px;color:#7b7b7b;letter-spacing:0.659px;-webkit-text-stroke:0.2px #7b7b7b;">000.00</span>
<span class="t" id="t58" style="left:985.15px;top:482.20px;font-size:12px;color:#7b7b7b;letter-spacing:-0.242px;-webkit-text-stroke:0.2px #7b7b7b;">ARS 10 347.22</span>
<span class="t" id="t59" style="left:1069.80px;top:482.20px;font-size:12px;color:#7b7b7b;letter-spacing:-0.476px;-webkit-text-stroke:0.2px #7b7b7b;">ARS 11 451.39</span>
<span class="t" id="t60" style="left:1167.00px;top:482.00px;font-size:12.5px;color:#2f8a63;letter-spacing:-0.174px;">Aprobada</span>
<span class="t" id="t61" style="left:399.50px;top:531.30px;font-size:12.5px;color:#7b7b7b;letter-spacing:0.613px;">00000-</span>
<span class="t" id="t62" style="left:390.80px;top:547.00px;font-size:12.5px;color:#7b7b7b;letter-spacing:0.568px;">00000005</span>
<span class="t" id="t63" style="left:475.90px;top:539.10px;font-size:12.5px;color:#7b7b7b;letter-spacing:-0.135px;">Provider</span>
<span class="t" id="t64" style="left:545.85px;top:539.10px;font-size:12.5px;color:#7b7b7b;letter-spacing:0.326px;">06/05/2025</span>
<span class="t" id="t65" style="left:640.90px;top:539.10px;font-size:12.5px;color:#7b7b7b;letter-spacing:0.160px;">07/05/2025</span>
<span class="t" id="t66" style="left:747.10px;top:539.10px;font-size:12.5px;color:#7b7b7b;letter-spacing:0.071px;">14/08/2025</span>
<span class="t" id="t67" style="left:835.30px;top:539.10px;font-size:12.5px;color:#7b7b7b;letter-spacing:0.160px;">07/05/2025</span>
<span class="t" id="t68" style="left:922.50px;top:531.30px;font-size:12px;color:#7b7b7b;letter-spacing:-0.672px;-webkit-text-stroke:0.2px #7b7b7b;">ARS 10</span>
<span class="t" id="t69" style="left:921.30px;top:547.00px;font-size:12px;color:#7b7b7b;letter-spacing:0.659px;-webkit-text-stroke:0.2px #7b7b7b;">000.00</span>
<span class="t" id="t70" style="left:985.15px;top:539.10px;font-size:12px;color:#7b7b7b;letter-spacing:-0.242px;-webkit-text-stroke:0.2px #7b7b7b;">ARS 10 347.22</span>
<span class="t" id="t71" style="left:1069.80px;top:539.10px;font-size:12px;color:#7b7b7b;letter-spacing:-0.476px;-webkit-text-stroke:0.2px #7b7b7b;">ARS 11 451.39</span>
<span class="t" id="t72" style="left:1179.80px;top:531.50px;font-size:12.5px;color:#2a9c8c;letter-spacing:-0.734px;">Pago</span>
<span class="t" id="t73" style="left:1161.30px;top:546.80px;font-size:12.5px;color:#2a9c8c;letter-spacing:-0.069px;">Confirmado</span>
<span class="t" id="t74" style="left:399.50px;top:588.60px;font-size:12.5px;color:#7b7b7b;letter-spacing:0.613px;">00000-</span>
<span class="t" id="t75" style="left:390.80px;top:604.30px;font-size:12.5px;color:#7b7b7b;letter-spacing:0.568px;">00000004</span>
<span class="t" id="t76" style="left:475.90px;top:596.40px;font-size:12.5px;color:#7b7b7b;letter-spacing:-0.135px;">Provider</span>
<span class="t" id="t77" style="left:545.85px;top:596.40px;font-size:12.5px;color:#7b7b7b;letter-spacing:0.326px;">05/05/2025</span>
<span class="t" id="t78" style="left:640.90px;top:596.40px;font-size:12.5px;color:#7b7b7b;letter-spacing:0.160px;">06/05/2025</span>
<span class="t" id="t79" style="left:747.10px;top:596.40px;font-size:12.5px;color:#7b7b7b;letter-spacing:0.071px;">13/08/2025</span>
<span class="t" id="t80" style="left:835.30px;top:596.40px;font-size:12.5px;color:#7b7b7b;letter-spacing:0.160px;">07/05/2025</span>
<span class="t" id="t81" style="left:922.50px;top:588.60px;font-size:12px;color:#7b7b7b;letter-spacing:-0.672px;-webkit-text-stroke:0.2px #7b7b7b;">ARS 10</span>
<span class="t" id="t82" style="left:921.30px;top:604.30px;font-size:12px;color:#7b7b7b;letter-spacing:0.659px;-webkit-text-stroke:0.2px #7b7b7b;">000.00</span>
<span class="t" id="t83" style="left:985.15px;top:596.40px;font-size:12px;color:#7b7b7b;letter-spacing:-0.242px;-webkit-text-stroke:0.2px #7b7b7b;">ARS 10 347.22</span>
<span class="t" id="t84" style="left:1069.80px;top:596.40px;font-size:12px;color:#7b7b7b;letter-spacing:-0.476px;-webkit-text-stroke:0.2px #7b7b7b;">ARS 11 451.39</span>
<span class="t" id="t85" style="left:1179.80px;top:588.80px;font-size:12.5px;color:#2a9c8c;letter-spacing:-0.734px;">Pago</span>
<span class="t" id="t86" style="left:1161.30px;top:604.10px;font-size:12.5px;color:#2a9c8c;letter-spacing:-0.069px;">Confirmado</span>
<span class="t" id="t87" style="left:399.50px;top:646.20px;font-size:12.5px;color:#7b7b7b;letter-spacing:0.613px;">00000-</span>
<span class="t" id="t88" style="left:390.80px;top:661.90px;font-size:12.5px;color:#7b7b7b;letter-spacing:0.568px;">00000003</span>
<span class="t" id="t89" style="left:475.90px;top:654.00px;font-size:12.5px;color:#7b7b7b;letter-spacing:-0.135px;">Provider</span>
<span class="t" id="t90" style="left:545.85px;top:654.00px;font-size:12.5px;color:#7b7b7b;letter-spacing:0.326px;">06/05/2025</span>
<span class="t" id="t91" style="left:640.90px;top:654.00px;font-size:12.5px;color:#7b7b7b;letter-spacing:0.160px;">06/05/2025</span>
<span class="t" id="t92" style="left:747.10px;top:654.00px;font-size:12.5px;color:#7b7b7b;letter-spacing:0.071px;">14/08/2025</span>
<span class="t" id="t93" style="left:835.30px;top:654.00px;font-size:12.5px;color:#7b7b7b;letter-spacing:0.160px;">07/05/2025</span>
<span class="t" id="t94" style="left:922.50px;top:646.20px;font-size:12px;color:#7b7b7b;letter-spacing:-0.672px;-webkit-text-stroke:0.2px #7b7b7b;">ARS 10</span>
<span class="t" id="t95" style="left:921.30px;top:661.90px;font-size:12px;color:#7b7b7b;letter-spacing:0.659px;-webkit-text-stroke:0.2px #7b7b7b;">000.00</span>
<span class="t" id="t96" style="left:985.15px;top:654.00px;font-size:12px;color:#7b7b7b;letter-spacing:-0.242px;-webkit-text-stroke:0.2px #7b7b7b;">ARS 10 347.22</span>
<span class="t" id="t97" style="left:1069.80px;top:654.00px;font-size:12px;color:#7b7b7b;letter-spacing:-0.476px;-webkit-text-stroke:0.2px #7b7b7b;">ARS 11 451.39</span>
<span class="t" id="t98" style="left:1179.80px;top:646.40px;font-size:12.5px;color:#2a9c8c;letter-spacing:-0.734px;">Pago</span>
<span class="t" id="t99" style="left:1161.30px;top:661.70px;font-size:12.5px;color:#2a9c8c;letter-spacing:-0.069px;">Confirmado</span>
<span class="t" id="t100" style="left:399.50px;top:703.20px;font-size:12.5px;color:#7b7b7b;letter-spacing:0.613px;">00000-</span>
<span class="t" id="t101" style="left:390.80px;top:718.90px;font-size:12.5px;color:#7b7b7b;letter-spacing:0.568px;">00000002</span>
<span class="t" id="t102" style="left:475.90px;top:711.00px;font-size:12.5px;color:#7b7b7b;letter-spacing:-0.135px;">Provider</span>
<span class="t" id="t103" style="left:545.85px;top:711.00px;font-size:12.5px;color:#7b7b7b;letter-spacing:0.326px;">06/05/2025</span>
<span class="t" id="t104" style="left:640.90px;top:711.00px;font-size:12.5px;color:#7b7b7b;letter-spacing:0.160px;">06/05/2025</span>
<span class="t" id="t105" style="left:747.10px;top:711.00px;font-size:12.5px;color:#7b7b7b;letter-spacing:0.071px;">14/08/2025</span>
<span class="t" id="t106" style="left:835.30px;top:711.00px;font-size:12.5px;color:#7b7b7b;letter-spacing:0.160px;">07/05/2025</span>
<span class="t" id="t107" style="left:922.50px;top:703.20px;font-size:12px;color:#7b7b7b;letter-spacing:-0.672px;-webkit-text-stroke:0.2px #7b7b7b;">ARS 10</span>
<span class="t" id="t108" style="left:921.30px;top:718.90px;font-size:12px;color:#7b7b7b;letter-spacing:0.659px;-webkit-text-stroke:0.2px #7b7b7b;">000.00</span>
<span class="t" id="t109" style="left:985.15px;top:711.00px;font-size:12px;color:#7b7b7b;letter-spacing:-0.242px;-webkit-text-stroke:0.2px #7b7b7b;">ARS 10 347.22</span>
<span class="t" id="t110" style="left:1069.80px;top:711.00px;font-size:12px;color:#7b7b7b;letter-spacing:-0.476px;-webkit-text-stroke:0.2px #7b7b7b;">ARS 11 451.39</span>
<span class="t" id="t111" style="left:1179.80px;top:703.40px;font-size:12.5px;color:#2a9c8c;letter-spacing:-0.734px;">Pago</span>
<span class="t" id="t112" style="left:1161.30px;top:718.70px;font-size:12.5px;color:#2a9c8c;letter-spacing:-0.069px;">Confirmado</span>
<span class="t" id="t113" style="left:399.50px;top:760.80px;font-size:12.5px;color:#7b7b7b;letter-spacing:0.613px;">00000-</span>
<span class="t" id="t114" style="left:390.80px;top:776.50px;font-size:12.5px;color:#7b7b7b;letter-spacing:0.568px;">00000001</span>
<span class="t" id="t115" style="left:475.90px;top:768.60px;font-size:12.5px;color:#7b7b7b;letter-spacing:-0.135px;">Provider</span>
<span class="t" id="t116" style="left:545.85px;top:768.60px;font-size:12.5px;color:#7b7b7b;letter-spacing:0.326px;">06/05/2025</span>
<span class="t" id="t117" style="left:640.90px;top:768.60px;font-size:12.5px;color:#7b7b7b;letter-spacing:0.160px;">06/05/2025</span>
<span class="t" id="t118" style="left:747.10px;top:768.60px;font-size:12.5px;color:#7b7b7b;letter-spacing:0.071px;">14/08/2025</span>
<span class="t" id="t119" style="left:835.30px;top:768.60px;font-size:12.5px;color:#7b7b7b;letter-spacing:0.160px;">07/05/2025</span>
<span class="t" id="t120" style="left:922.50px;top:760.80px;font-size:12px;color:#7b7b7b;letter-spacing:-0.672px;-webkit-text-stroke:0.2px #7b7b7b;">ARS 10</span>
<span class="t" id="t121" style="left:921.30px;top:776.50px;font-size:12px;color:#7b7b7b;letter-spacing:0.659px;-webkit-text-stroke:0.2px #7b7b7b;">000.00</span>
<span class="t" id="t122" style="left:985.15px;top:768.60px;font-size:12px;color:#7b7b7b;letter-spacing:-0.242px;-webkit-text-stroke:0.2px #7b7b7b;">ARS 10 347.22</span>
<span class="t" id="t123" style="left:1069.80px;top:768.60px;font-size:12px;color:#7b7b7b;letter-spacing:-0.476px;-webkit-text-stroke:0.2px #7b7b7b;">ARS 11 451.39</span>
<span class="t" id="t124" style="left:1179.80px;top:761.00px;font-size:12.5px;color:#2a9c8c;letter-spacing:-0.734px;">Pago</span>
<span class="t" id="t125" style="left:1161.30px;top:776.30px;font-size:12.5px;color:#2a9c8c;letter-spacing:-0.069px;">Confirmado</span>
<span class="t" id="t126" style="left:336.60px;top:847.00px;font-size:14.5px;color:#3a3a3a;letter-spacing:0.360px;">Anterior</span>
<span class="t" id="t127" style="left:1244.00px;top:847.00px;font-size:14.5px;color:#3a3a3a;letter-spacing:0.191px;">Siguiente</span>
<span class="t" id="t128" style="left:776.90px;top:847.00px;font-size:14px;color:#222222;letter-spacing:-0.092px;">Página 1 de 1</span>
</body></html>
